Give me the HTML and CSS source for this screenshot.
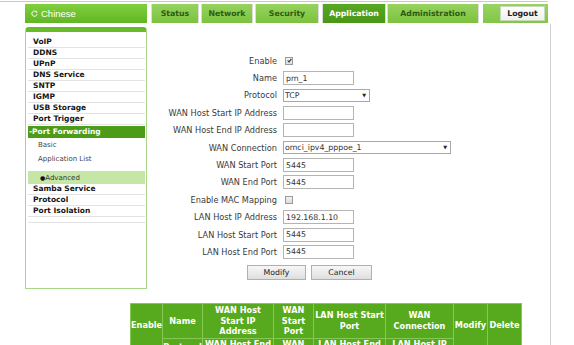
FILE: index.html
```html
<!DOCTYPE html>
<html>
<head>
<meta charset="utf-8">
<link rel="stylesheet" href="styles.css">
</head>
<body>
<div class="page">
  <header class="top">
    <div class="lang">
      <svg class="lang-ico" width="7" height="7" viewBox="0 0 7 7"><path d="M5.6 2.2 A2.6 2.6 0 1 0 6 4.2" fill="none" stroke="#fff" stroke-width="1"/><path d="M4.3 1.2 L6.3 1.2 L6 3.2 Z" fill="#fff"/></svg>
      <span>Chinese</span>
    </div>
    <nav class="tabs">
      <a class="tab tab-status">Status</a>
      <a class="tab tab-network">Network</a>
      <a class="tab tab-security">Security</a>
      <a class="tab tab-app active">Application</a>
      <a class="tab tab-admin">Administration</a>
    </nav>
    <div class="logout-box"><button class="logout">Logout</button></div>
  </header>
  <div class="body">
    <div class="main">
      <aside class="menu">
        <a class="mi">VoIP</a>
        <a class="mi">DDNS</a>
        <a class="mi">UPnP</a>
        <a class="mi">DNS Service</a>
        <a class="mi">SNTP</a>
        <a class="mi">IGMP</a>
        <a class="mi">USB Storage</a>
        <a class="mi">Port Trigger</a>
        <a class="mi mi-open">-Port Forwarding</a>
        <a class="sub">Basic</a>
        <a class="sub">Application List</a>
        <a class="sub sub-active"><span class="dot">●</span>Advanced</a>
        <a class="mi">Samba Service</a>
        <a class="mi">Protocol</a>
        <a class="mi">Port Isolation</a>
        <div class="mi mi-empty"></div>
      </aside>
      <section class="content">
        <div class="form">
          <label>Enable</label>
          <div><span class="cb"><svg width="5" height="5" viewBox="0 0 6 6"><path d="M0.8 3 L2.4 4.7 L5.3 1" fill="none" stroke="#333" stroke-width="1.3"/></svg></span></div>
          <label>Name</label><div><input class="txt" value="pm_1"></div>
          <label>Protocol</label>
          <div><span class="selwrap sel-proto"><select class="sel"><option>TCP</option></select><span class="arrow">▼</span></span></div>
          <label>WAN Host Start IP Address</label><div><input class="txt" value=""></div>
          <label>WAN Host End IP Address</label><div><input class="txt" value=""></div>
          <label>WAN Connection</label>
          <div><span class="selwrap sel-wan"><select class="sel"><option>omci_ipv4_pppoe_1</option></select><span class="arrow">▼</span></span></div>
          <label>WAN Start Port</label><div><input class="txt" value="5445"></div>
          <label>WAN End Port</label><div><input class="txt" value="5445"></div>
          <label>Enable MAC Mapping</label><div><span class="cb"></span></div>
          <label>LAN Host IP Address</label><div><input class="txt" value="192.168.1.10"></div>
          <label>LAN Host Start Port</label><div><input class="txt" value="5445"></div>
          <label>LAN Host End Port</label><div><input class="txt" value="5445"></div>
        </div>
        <div class="buttons">
          <button class="btn btn-modify">Modify</button>
          <button class="btn btn-cancel">Cancel</button>
        </div>
      </section>
    </div>
    <table class="list">
      <colgroup>
        <col class="c1"><col class="c2"><col class="c3"><col class="c4"><col class="c5"><col class="c6"><col class="c7"><col class="c8">
      </colgroup>
      <tr class="r1">
        <th rowspan="2" class="span">Enable</th>
        <th>Name</th>
        <th>WAN Host Start IP Address</th>
        <th>WAN Start Port</th>
        <th>LAN Host Start Port</th>
        <th>WAN Connection</th>
        <th rowspan="2" class="span">Modify</th>
        <th rowspan="2" class="span">Delete</th>
      </tr>
      <tr class="r2">
        <th class="proto">Protocol</th>
        <th>WAN Host End IP Address</th>
        <th>WAN End Port</th>
        <th>LAN Host End Port</th>
        <th>LAN Host IP Address</th>
      </tr>
    </table>
  </div>
</div>
</body>
</html>
```

FILE: styles.css
```css
html, body { margin: 0; padding: 0; background: #fff; }
body {
  font-family: "DejaVu Sans", Verdana, sans-serif;
  font-size: 7.5px;
  color: #333;
}
.page { width: 550px; }

/* header */
.top {
  display: flex;
  width: 548px;
  box-sizing: border-box;
  margin-top: 1px;
  border-top: 1px solid #c9c9c9;
  padding: 2px 0 0 25px;
  height: 23px;
}
.lang {
  width: 122px;
  height: 19px;
  box-sizing: border-box;
  background: linear-gradient(#7fcf3e, #63b623);
  color: #fff;
  font-family: "Liberation Sans", Arial, sans-serif;
  font-size: 9.5px;
  display: flex;
  align-items: center;
  gap: 3px;
  padding-left: 6px;
}
.tabs { display: flex; gap: 4px; margin-left: 5px; }
.tab {
  height: 19px;
  display: flex;
  align-items: center;
  justify-content: center;
  background: linear-gradient(#96d35e, #7cc23f);
  color: #2d5c10;
  font-weight: bold;
  font-size: 7.8px;
  box-shadow: -1px 0 0 #dcdcdc, 1px 0 0 #dcdcdc;
}
.tab-status { width: 46px; }
.tab-network { width: 50px; }
.tab-security { width: 62px; }
.tab-app { width: 62px; margin-left: 1px; }
.tab-admin { width: 90px; margin-left: -1px; }
.tab.active { background: linear-gradient(#56a821, #4a9618); color: #fff; }
.logout-box {
  margin-left: 5px;
  width: 65px;
  height: 19px;
  background: linear-gradient(#98d462, #82c547);
  display: flex;
  align-items: center;
  justify-content: flex-end;
  padding-right: 3px;
  box-sizing: border-box;
}
.logout {
  width: 45px;
  height: 15px;
  border: 1px solid #c9d9bc;
  background: linear-gradient(#ffffff, #eef2ea);
  font-family: "DejaVu Sans", Verdana, sans-serif;
  font-size: 7.8px;
  font-weight: bold;
  color: #222;
  padding: 0;
}

/* body */
.body {
  width: 551px;
  box-sizing: border-box;
  border-right: 1px solid #cfcfcf;
  padding-bottom: 40px;
}
.main { display: flex; padding-top: 3px; }

.menu {
  margin-left: 25px;
  width: 122px;
  height: 262px;
  box-sizing: border-box;
  border: 1px solid #a9d68a;
  border-top: 5px solid #68bc2a;
  border-radius: 4px 4px 0 0;
  padding: 5px 1px 0 2px;
  display: flex;
  flex-direction: column;
}
.mi {
  display: block;
  height: 11px;
  line-height: 10px;
  box-sizing: border-box;
  padding-left: 5px;
  border-bottom: 1px solid #e3e3e3;
  font-weight: bold;
  color: #151515;
  font-size: 7.5px;
}
.mi-open {
  height: 12px;
  line-height: 12px;
  margin-top: 1px;
  padding-left: 1px;
  background: #4c9c17;
  color: #fff;
  border-bottom: 0;
}
.mi-empty { height: 6px; }
.sub {
  display: block;
  height: 14px;
  line-height: 14px;
  padding-left: 10px;
  color: #444;
  font-size: 7px;
}
.sub-active {
  margin-top: 5px;
  height: 13px;
  line-height: 14px;
  padding-left: 12px;
  background: #c6e6a6;
  color: #333;
}
.dot { font-size: 6px; color: #111; }

/* form */
.content { flex: 1; padding-top: 25px; }
.form {
  display: grid;
  grid-template-columns: 130px 1fr;
  column-gap: 6px;
  grid-auto-rows: 17.4px;
  align-items: center;
}
.form label { text-align: right; color: #3a3a3a; white-space: nowrap; font-size: 8.2px; }
.form > div { display: flex; align-items: center; }
.txt {
  width: 71px;
  height: 14px;
  box-sizing: border-box;
  border: 1px solid #b4b4b4;
  padding: 0 2px;
  margin: 0;
  font-family: "DejaVu Sans", Verdana, sans-serif;
  font-size: 7.8px;
  color: #333;
}
.selwrap { position: relative; display: block; height: 13px; }
.sel {
  appearance: none;
  -webkit-appearance: none;
  width: 100%;
  height: 13px;
  box-sizing: border-box;
  border: 1px solid #a8a8a8;
  border-radius: 0;
  padding: 0 1px;
  margin: 0;
  font-family: "DejaVu Sans", Verdana, sans-serif;
  font-size: 7.8px;
  color: #333;
  background: #fff;
}
.arrow {
  position: absolute;
  right: 4px;
  top: 3px;
  font-size: 5px;
  line-height: 7px;
  color: #222;
  pointer-events: none;
}
.sel-proto { width: 87px; }
.sel-wan { width: 168px; }
.cb {
  width: 6px;
  height: 6px;
  margin-left: 2px;
  border: 1px solid #9a9a9a;
  background: linear-gradient(#f2f2f2, #dcdcdc);
  display: flex;
  align-items: center;
  justify-content: center;
}
.cb svg { display: block; }

.buttons { display: flex; gap: 5px; padding-left: 100px; margin-top: 4px; }
.btn {
  height: 15px;
  box-sizing: border-box;
  border: 1px solid #b0b0b0;
  background: linear-gradient(#f7f7f7, #dedede);
  font-family: "DejaVu Sans", Verdana, sans-serif;
  font-size: 7.8px;
  color: #222;
  padding: 0;
}
.btn-modify { width: 59px; }
.btn-cancel { width: 61px; }

/* table */
.list {
  margin: 14px 0 0 130px;
  border-collapse: collapse;
  table-layout: fixed;
  width: 391px;
  background: #57a91e;
}
.c1 { width: 32px; } .c2 { width: 40px; } .c3 { width: 71px; } .c4 { width: 40px; }
.c5 { width: 72px; } .c6 { width: 68px; } .c7 { width: 34px; } .c8 { width: 34px; }
.list th {
  border: 1px solid #86c856;
  color: #fff;
  font-weight: bold;
  font-size: 8.2px;
  line-height: 10.5px;
  padding: 1px 0;
  text-align: center;
  overflow: hidden;
  white-space: normal;
}
.list .r1 th { height: 29px; }
.list .r2 th { vertical-align: top; padding-top: 0; }
.list .r2 th.proto { padding-top: 3px; }
.list th.span { vertical-align: top; padding-top: 16px; white-space: nowrap; }
```
